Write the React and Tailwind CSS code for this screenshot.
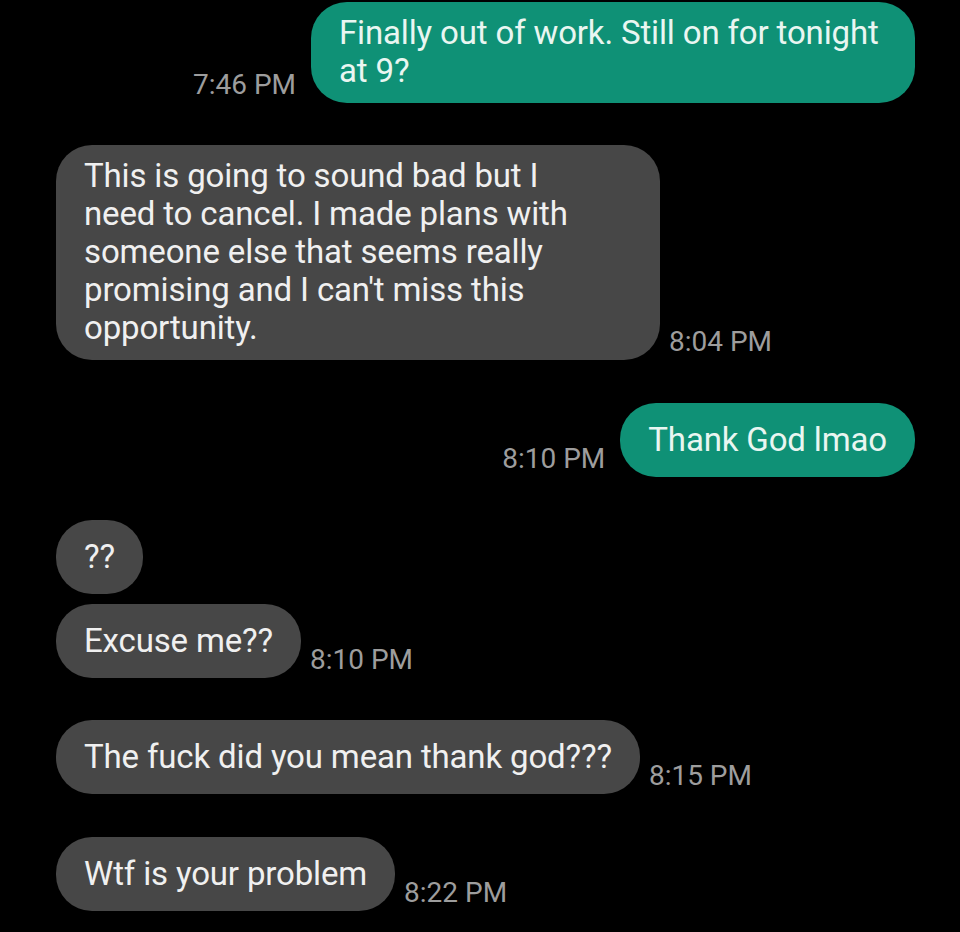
const messages = [
  { id: 1, from: "me", lines: ["Finally out of work. Still on for tonight", "at 9?"], time: "7:46 PM", gap: "mt-[2px]" },
  { id: 2, from: "them", lines: ["This is going to sound bad but I", "need to cancel. I made plans with", "someone else that seems really", "promising and I can't miss this", "opportunity."], time: "8:04 PM", gap: "mt-[42px]" },
  { id: 3, from: "me", lines: ["Thank God lmao"], time: "8:10 PM", gap: "mt-[43px]" },
  { id: 4, from: "them", lines: ["??"], time: null, gap: "mt-[43px]" },
  { id: 5, from: "them", lines: ["Excuse me??"], time: "8:10 PM", gap: "mt-[10px]" },
  { id: 6, from: "them", lines: ["The fuck did you mean thank god???"], time: "8:15 PM", gap: "mt-[42px]" },
  { id: 7, from: "them", lines: ["Wtf is your problem"], time: "8:22 PM", gap: "mt-[43px]" },
];

function Bubble({ msg }) {
  const multi = msg.lines.length > 1;
  const mine = msg.from === "me";
  return (
    <div
      className={`rounded-[36px] px-[28px] text-[33px] leading-[38px] tracking-[-0.15px] ${
        multi ? "w-[604px] pt-[12px] pb-[13px]" : "py-[18px]"
      } ${mine ? "bg-[#0f9176] text-[#e9f6f1]" : "bg-[#474747] text-[#f0f0f0]"}`}
    >
      {msg.lines.map((l, i) => (
        <div key={i} className="whitespace-nowrap">{l}</div>
      ))}
    </div>
  );
}

function Time({ t }) {
  return <span className="text-[28px] leading-[36px] text-[#9d9d9d] whitespace-nowrap">{t}</span>;
}

export default function App() {
  return (
    <div className="min-h-[932px] w-[960px] bg-black font-['Roboto',sans-serif] overflow-hidden">
      {messages.map(msg =>
        msg.from === "me" ? (
          <div key={msg.id} className={`flex justify-end items-end gap-[15px] pr-[45px] ${msg.gap}`}>
            <Time t={msg.time} />
            <Bubble msg={msg} />
          </div>
        ) : (
          <div key={msg.id} className={`flex items-end gap-[9px] pl-[56px] ${msg.gap}`}>
            <Bubble msg={msg} />
            {msg.time && <Time t={msg.time} />}
          </div>
        )
      )}
    </div>
  );
}
